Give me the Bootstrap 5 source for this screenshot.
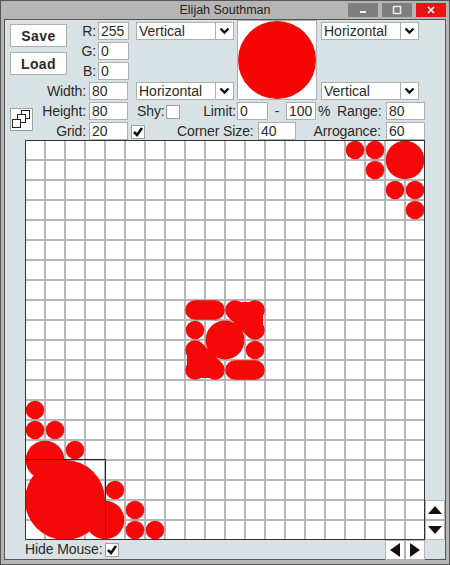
<!DOCTYPE html>
<html lang="en">
<head>
    <meta charset="UTF-8">
    <title>Elijah Southman</title>
    <link rel="stylesheet" href="https://cdn.jsdelivr.net/npm/bootstrap@5.3.0/dist/css/bootstrap.min.css">
    <style>
        html, body { width: 450px; height: 565px; overflow: hidden; }
        body { background: #d8e2e4; font-family: "Liberation Sans", Arial, sans-serif; font-size: 14px; color: #2a2a2a; line-height: 1; }
        .app-window { width: 450px; height: 565px; background: #b5b5b5; border: 1px solid #555; display: flex; flex-direction: column; }
        .app-title { height: 18px; position: relative; text-align: center; font-size: 12.5px; line-height: 19px; color: #222; }
        .win-btns { position: absolute; top: 2px; right: 3px; display: flex; gap: 4px; }
        .win-btn { width: 30px; height: 14px; background: #7e7e7e; display: flex; align-items: center; justify-content: center; }
        .win-btn.close-red { background: #e81313; }
        .app-client { flex: 1; margin: 0 3px 4px 3px; background: #d8e2e4; border: 1px solid #555; padding-left: 5px; display: flex; flex-direction: column; }

        .ctl-row { display: flex; align-items: flex-end; height: 20px; }
        .fld { background: #fff; border: 1px solid #aab0b2; height: 18px; padding-left: 2px; line-height: 17px; white-space: nowrap; overflow: hidden; }
        .lbl { text-align: right; white-space: nowrap; line-height: 17px; flex: none; letter-spacing: -.1px; }
        .sel-box { display: flex; width: 98px; height: 18px; background: #fff; border: 1px solid #aab0b2; line-height: 17px; padding-left: 2px; justify-content: space-between; }
        .sel-arrow { width: 18px; border-left: 1px solid #aab0b2; display: flex; align-items: center; justify-content: center; }
        .chk-box { width: 14px; height: 14px; background: #fff; border: 1px solid #9aa0a2; display: flex; align-items: center; justify-content: center; flex: none; margin-bottom: 1px; }
        .tool-btn { width: 57px; height: 23px; background: #fff; border: 1px solid #aab0b2; font-weight: 700; letter-spacing: .4px; display: flex; align-items: center; justify-content: center; }
        .preview-box { width: 80px; height: 80px; background: #fff; border: 1px solid #aab0b2; }
        .copy-btn { width: 23px; height: 23px; background: #fff; border: 1px solid #9aa0a2; margin-top: 8px; display: flex; align-items: center; justify-content: center; flex: none; }
        .top-block { display: flex; height: 80px; }
        .btn-col { width: 62px; gap: 5px; padding-top: 4px; }
        .sel-col { justify-content: space-between; padding-top: 2px; }
        .sel-col-left { width: 103px; padding-left: 2px; }
        .sel-col-right { padding-left: 4px; }
        .lower-block { display: flex; height: 40px; }
        .canvas-row { display: flex; height: 400px; margin-left: 15px; }
        .canvas-row svg.paint { display: block; }
        .scroll-v { align-self: flex-end; }
        .arrow-btn { width: 20px; height: 20px; background: #fff; border: 1px solid #b4b4b4; display: flex; align-items: center; justify-content: center; }
        .foot-row { display: flex; justify-content: space-between; height: 19px; width: 400px; margin-left: 15px; }
        .foot-left { display: flex; align-items: center; }
        .foot-left .chk-box { margin: 0 0 0 3px; }
        .arrow-pair { display: flex; }

        .w10 { width: 10px; } .w18 { width: 18px; } .w24 { width: 24px; } .w26 { width: 26px; } .w30 { width: 30px; } .w31 { width: 31px; }
        .w34 { width: 34px; } .w38 { width: 38px; } .w39 { width: 39px; } .w44 { width: 44px; } .w53 { width: 53px; }
        .w68 { width: 68px; } .w76 { width: 76px; } .w77 { width: 77px; }
        .ml1 { margin-left: 1px; } .ml2 { margin-left: 2px; } .ml3 { margin-left: 3px; } .ml5 { margin-left: 5px; }
        .ml9 { margin-left: 9px; } .ml17 { margin-left: 17px; } .ml22 { margin-left: 22px; } .ml32 { margin-left: 32px; }
        .mr2 { margin-right: 2px; }
        .txt-left { text-align: left; } .txt-mid { text-align: center; }
    </style>
</head>
<body>
    <div class="app-window">
        <div class="app-title">Elijah Southman
            <div class="win-btns">
                <div class="win-btn"><svg width="8" height="8"><rect x="1" y="5" width="6" height="2" fill="#eee"/></svg></div>
                <div class="win-btn"><svg width="10" height="10"><rect x="1.5" y="1.5" width="7" height="7" fill="none" stroke="#eee" stroke-width="1.5"/></svg></div>
                <div class="win-btn close-red"><svg width="10" height="10"><path d="M2 2l6 6M8 2l-6 6" stroke="#fff" stroke-width="1.6"/></svg></div>
            </div>
        </div>
        <div class="app-client">
            <div class="top-block">
                <div class="d-flex flex-column">
                    <div class="d-flex">
                        <div class="d-flex flex-column btn-col">
                            <div class="tool-btn">Save</div>
                            <div class="tool-btn">Load</div>
                        </div>
                        <div class="d-flex flex-column">
                            <div class="ctl-row"><span class="lbl w24 mr2">R:</span><div class="fld w31">255</div></div>
                            <div class="ctl-row"><span class="lbl w24 mr2">G:</span><div class="fld w31">0</div></div>
                            <div class="ctl-row"><span class="lbl w24 mr2">B:</span><div class="fld w31">0</div></div>
                        </div>
                    </div>
                    <div class="ctl-row"><span class="lbl w76">Width:</span><div class="fld w39 ml3">80</div></div>
                </div>
                <div class="d-flex flex-column sel-col sel-col-left ml5">
                    <div class="sel-box">Vertical<span class="sel-arrow"><svg width="11" height="8"><path d="M1.5 1.5l4 4 4-4" fill="none" stroke="#111" stroke-width="2.4"/></svg></span></div>
                    <div class="sel-box">Horizontal<span class="sel-arrow"><svg width="11" height="8"><path d="M1.5 1.5l4 4 4-4" fill="none" stroke="#111" stroke-width="2.4"/></svg></span></div>
                </div>
                <div class="preview-box"><svg width="78" height="78"><circle cx="39" cy="39" r="39" fill="#f70606"/></svg></div>
                <div class="d-flex flex-column sel-col sel-col-right">
                    <div class="sel-box">Horizontal<span class="sel-arrow"><svg width="11" height="8"><path d="M1.5 1.5l4 4 4-4" fill="none" stroke="#111" stroke-width="2.4"/></svg></span></div>
                    <div class="sel-box">Vertical<span class="sel-arrow"><svg width="11" height="8"><path d="M1.5 1.5l4 4 4-4" fill="none" stroke="#111" stroke-width="2.4"/></svg></span></div>
                </div>
            </div>
            <div class="lower-block">
                <div class="copy-btn">
                    <svg width="21" height="21" fill="#fff" stroke="#222">
                        <rect x="10.5" y="1.5" width="8" height="8"/>
                        <rect x="6.5" y="5.5" width="8" height="8"/>
                        <rect x="1.5" y="10.5" width="8" height="8"/>
                    </svg>
                </div>
                <div>
                    <div class="ctl-row">
                        <span class="lbl w53">Height:</span><div class="fld w39 ml3">80</div>
                        <span class="lbl w26 ml9 txt-left">Shy:</span>
                        <div class="chk-box ml3"></div>
                        <span class="lbl w34 ml22">Limit:</span><div class="fld w31 ml1">0</div>
                        <span class="lbl w18 txt-mid">-</span><div class="fld w30">100</div>
                        <span class="lbl w10 ml2">%</span>
                        <span class="lbl w44 ml9">Range:</span><div class="fld w39 ml5">80</div>
                    </div>
                    <div class="ctl-row">
                        <span class="lbl w53">Grid:</span><div class="fld w39 ml3">20</div>
                        <div class="chk-box ml3"><svg width="12" height="12"><path d="M2 6l3 3 5-7" fill="none" stroke="#111" stroke-width="2.6"/></svg></div>
                        <span class="lbl w76 ml32">Corner Size:</span><div class="fld w38 ml5">40</div>
                        <span class="lbl w68 ml17">Arrogance:</span><div class="fld w39 ml5">60</div>
                    </div>
                </div>
            </div>
            <div class="canvas-row">
                <svg class="paint" width="400" height="400" fill="#f60808">
                    <defs>
                        <pattern id="cells" width="20" height="20" patternUnits="userSpaceOnUse">
                            <path d="M0 0H20V20H0Z" stroke="#b6b6b6" stroke-width="2" fill="none"/>
                        </pattern>
                    </defs>
                    <rect width="400" height="400" fill="#fff"/>
                    <rect width="400" height="400" fill="url(#cells)"/>

                    <!-- top right -->
                    <circle cx="330" cy="10" r="9.3"/><circle cx="350" cy="10" r="9.3"/><circle cx="350" cy="30" r="9.3"/>
                    <circle cx="380" cy="20" r="19.3"/>
                    <circle cx="370" cy="50" r="9.3"/><circle cx="390" cy="50" r="9.3"/><circle cx="390" cy="70" r="9.3"/>

                    <!-- middle -->
                    <g fill="none" stroke="#f60808" stroke-width="19.5" stroke-linecap="round">
                        <path d="M170 170H190"/>
                        <path d="M210 170L230 190"/>
                        <path d="M170 210L190 230"/>
                        <path d="M210 230H230"/>
                    </g>
                    <g fill="none" stroke="#f60808" stroke-width="16" stroke-linejoin="round">
                        <path d="M210 170H230V190"/>
                        <path d="M170 210V230H190"/>
                    </g>
                    <circle cx="230" cy="170" r="9.8"/>
                    <circle cx="170" cy="230" r="9.8"/>
                    <circle cx="200" cy="200" r="19.5"/>
                    <circle cx="170" cy="190" r="9.3"/><circle cx="230" cy="210" r="9.3"/>

                    <!-- bottom left -->
                    <circle cx="10" cy="270" r="9.3"/><circle cx="10" cy="290" r="9.3"/><circle cx="30" cy="290" r="9.3"/>
                    <circle cx="50" cy="310" r="9.3"/><circle cx="20" cy="320" r="19.3"/>
                    <circle cx="40" cy="360" r="40"/>
                    <circle cx="90" cy="350" r="9.3"/><circle cx="80" cy="380" r="19.3"/>
                    <circle cx="110" cy="370" r="9.3"/><circle cx="110" cy="390" r="9.3"/><circle cx="130" cy="390" r="9.3"/>

                    <rect x=".5" y="319.5" width="80" height="80" fill="none" stroke="#222"/>
                    <rect x=".5" y=".5" width="399" height="399" fill="none" stroke="#333"/>
                </svg>
                <div class="scroll-v">
                    <div class="arrow-btn"><svg width="14" height="8"><path d="M7 0l7 8H0z" fill="#111"/></svg></div>
                    <div class="arrow-btn"><svg width="14" height="8"><path d="M0 0h14L7 8z" fill="#111"/></svg></div>
                </div>
            </div>
            <div class="foot-row">
                <div class="foot-left"><span class="lbl w77 txt-left">Hide Mouse:</span>
                    <div class="chk-box"><svg width="12" height="12"><path d="M2 6l3 3 5-7" fill="none" stroke="#111" stroke-width="2.6"/></svg></div>
                </div>
                <div class="arrow-pair">
                    <div class="arrow-btn"><svg width="10" height="14"><path d="M10 0v14L0 7z" fill="#111"/></svg></div>
                    <div class="arrow-btn"><svg width="10" height="14"><path d="M0 0l10 7L0 14z" fill="#111"/></svg></div>
                </div>
            </div>
        </div>
    </div>
</body>
</html>
